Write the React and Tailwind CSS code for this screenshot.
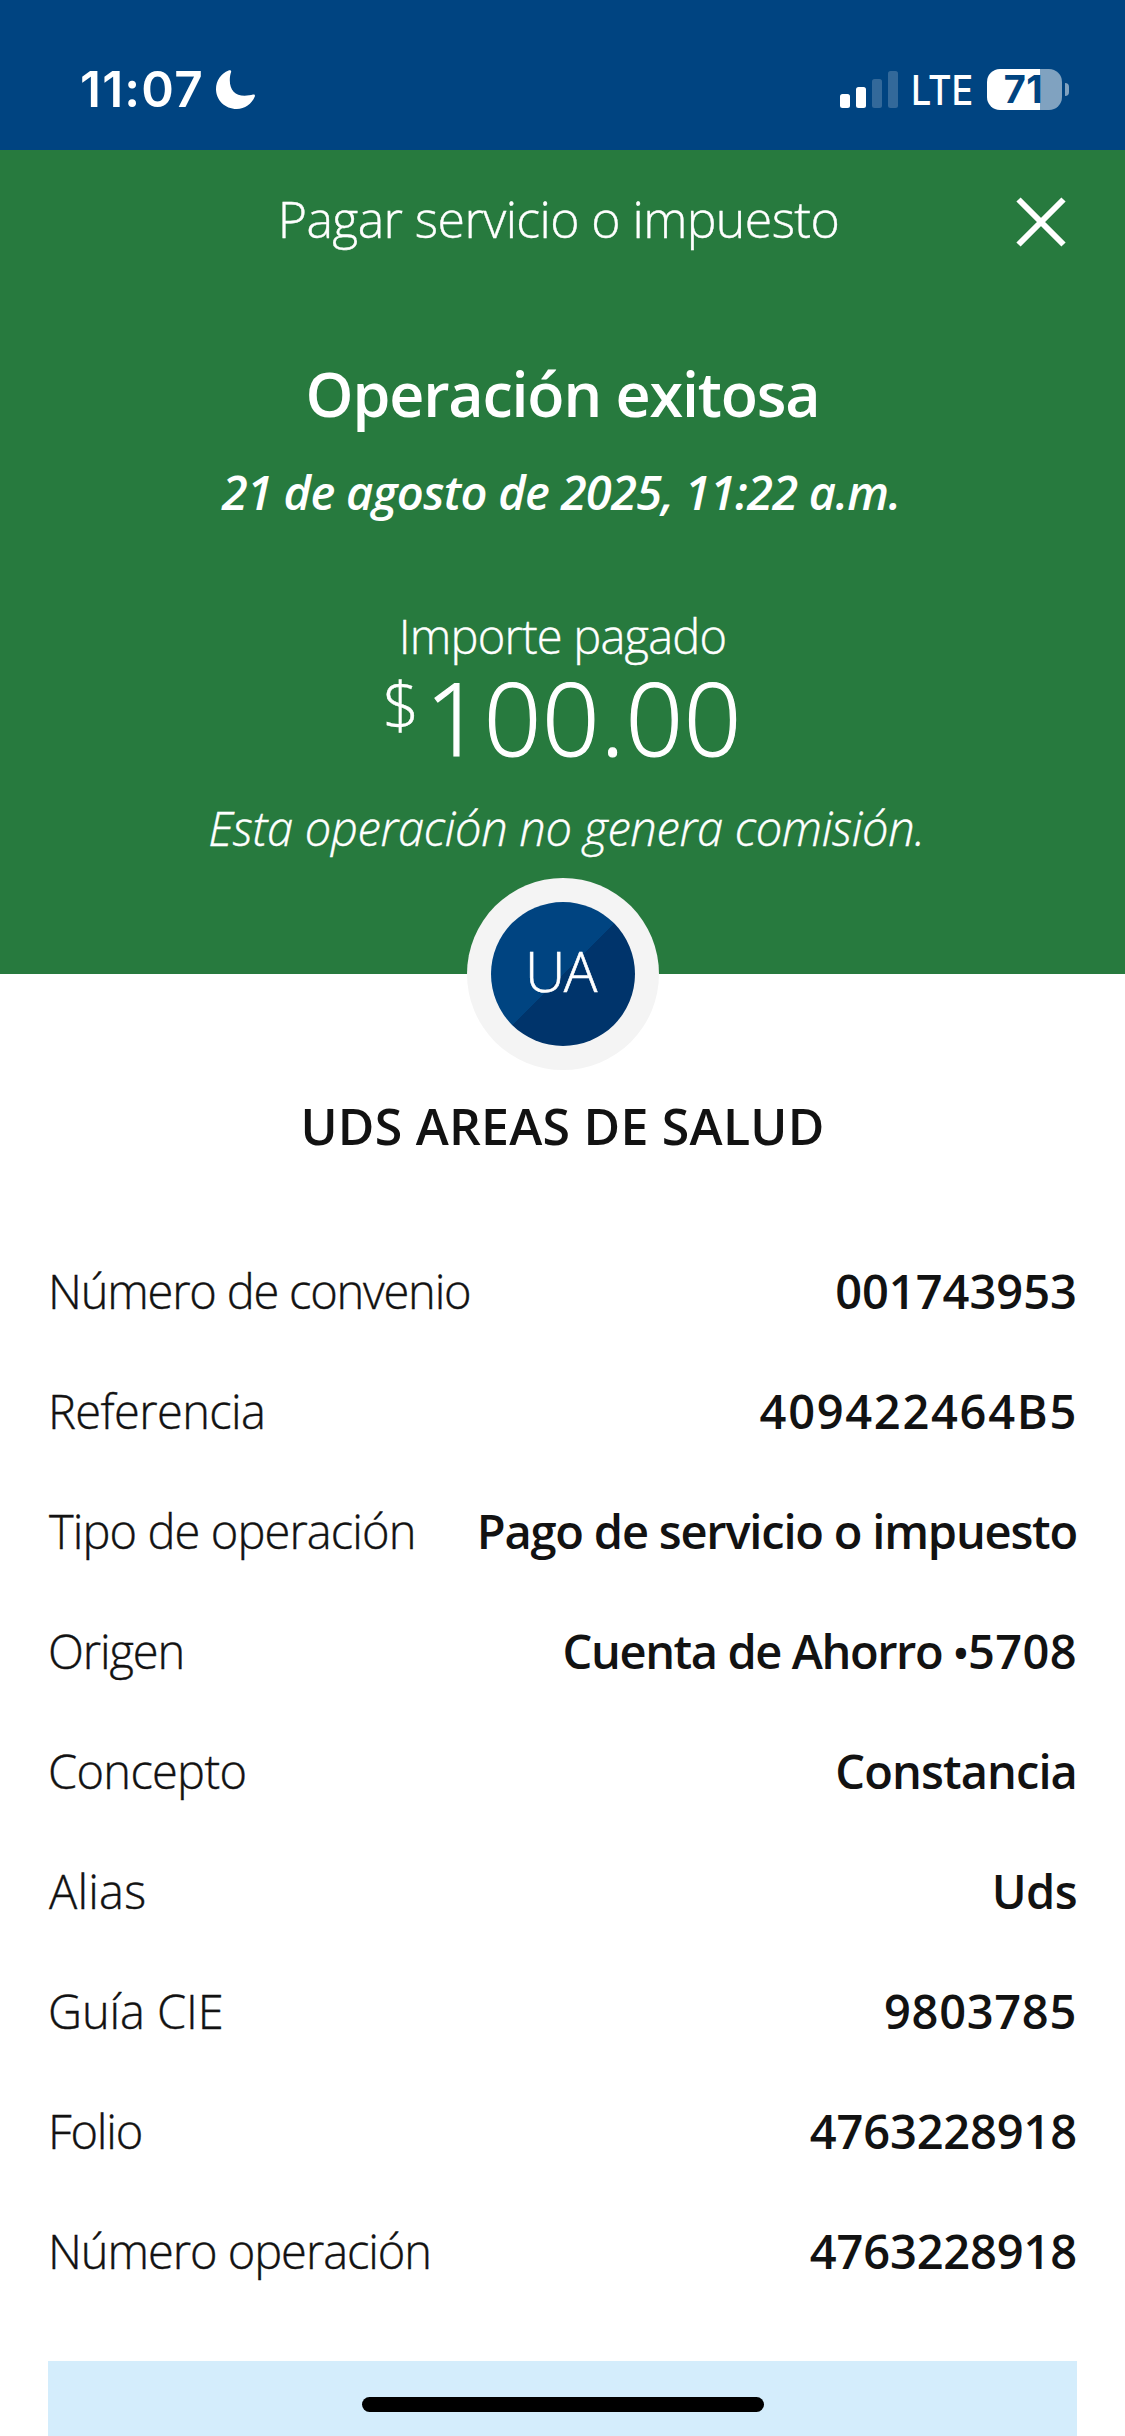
// src/pages/PaymentReceipt.js
import React from "react";

const details = [
  { label: "Número de convenio", value: "001743953", labelClass: "-ml-px tracking-[-1.2px]", valueClass: "tracking-[0px]" },
  { label: "Referencia", value: "409422464B5", labelClass: "-ml-px tracking-[-0.6px]", valueClass: "tracking-[1.7px] -mr-px" },
  { label: "Tipo de operación", value: "Pago de servicio o impuesto", labelClass: "tracking-[-0.9px]", valueClass: "tracking-[-1.2px]" },
  {
    label: "Origen",
    value: (
      <>
        Cuenta de Ahorro <span className="text-[42px] tracking-[-1px]">•</span>
        <span className="tracking-[0.4px]">5708</span>
      </>
    ),
    labelClass: "-ml-px tracking-[-1.1px]",
    valueClass: "tracking-[-1.4px]",
  },
  { label: "Concepto", value: "Constancia", labelClass: "-ml-px tracking-[-0.7px]", valueClass: "tracking-[-0.9px]" },
  { label: "Alias", value: "Uds", labelClass: "tracking-[0.2px]", valueClass: "tracking-[-0.6px]" },
  { label: "Guía CIE", value: "9803785", labelClass: "-ml-px tracking-[-0.1px]", valueClass: "tracking-[0.7px]" },
  { label: "Folio", value: "4763228918", labelClass: "-ml-px tracking-[-1.2px]", valueClass: "tracking-[-0.15px]" },
  { label: "Número operación", value: "4763228918", labelClass: "-ml-px tracking-[-1.05px]", valueClass: "tracking-[-0.15px]" },
];

function StatusBar() {
  return (
    <div className="flex h-[150px] items-center justify-between bg-[#004481] pt-7 pl-20 pr-14 font-['Inter',sans-serif] text-white">
      <div className="flex items-center">
        <span className="w-[124px] pt-[2px] text-[49.5px] leading-none font-semibold tracking-[1.2px] whitespace-nowrap">11:07</span>
        <svg className="ml-3 h-[39px] w-[39px]" viewBox="0 0 39 39" fill="currentColor">
          <path d="M12.6 0.4 C14 -0.3 15.6 0.4 15.1 2 C14.3 4.4 13.8 7 13.8 10.2 C13.8 19.8 19.2 25.8 28.6 25.8 C31.8 25.8 34.6 25.3 37 24.6 C38.5 24.1 39.3 25.2 38.8 26.6 C35.8 34 28.8 39 20.8 39 C9 39 0 30.2 0 19 C0 10.6 5 3.6 12.6 0.4 Z" />
        </svg>
      </div>

      <div className="flex items-center">
        <svg className="h-[37px] w-[58px]" viewBox="0 0 58 37" fill="currentColor">
          <rect x="0" y="23" width="10" height="14" rx="2.5" />
          <rect x="16" y="16" width="10" height="21" rx="2.5" />
          <rect x="32" y="8" width="10" height="29" rx="2.5" opacity="0.2" />
          <rect x="48" y="0" width="10" height="37" rx="2.5" opacity="0.2" />
        </svg>
        <span className="ml-[13px] w-[76px] origin-left scale-x-88 pt-[2px] text-[41px] leading-[42px] font-medium">LTE</span>
        {/* Battery */}
        <div className="flex h-[41px] w-[75px] items-center justify-center rounded-[13px] bg-linear-to-r from-white from-[53px] to-[#80a2c0] to-[53px] pr-[2px] text-[38px] leading-none font-bold tracking-[0.5px] text-[#004481]">
          71
        </div>
        <div className="ml-[3px] h-[13px] w-1 rounded-r-full bg-[#80a2c0]" />
      </div>
    </div>
  );
}

function DetailRow({ item }) {
  return (
    <div className="flex h-[120px] items-center justify-between text-[47px] whitespace-nowrap">
      <span className={`font-light [-webkit-text-stroke:0.4px] ${item.labelClass}`}>{item.label}</span>
      <span className={`font-semibold ${item.valueClass}`}>{item.value}</span>
    </div>
  );
}

export default function PaymentReceipt() {
  return (
    <div className="flex h-[2436px] w-[1125px] flex-col overflow-hidden bg-white font-['Open_Sans',sans-serif] text-[#121212]">
      <StatusBar />

      {/* Header */}
      <div className="flex h-[824px] shrink-0 flex-col items-center bg-[#277a3e] whitespace-nowrap text-white">
        <div className="grid h-[135px] w-full grid-cols-[108px_1fr_108px] items-center">
          <span />
          <h1 className="-ml-2 pt-[3px] text-center text-[50px] font-light tracking-[-0.6px] [-webkit-text-stroke:0.4px]">
            Pagar servicio o impuesto
          </h1>
          <button aria-label="Cerrar" className="mt-[9px] -ml-px">
            <svg className="h-[50px] w-[50px]" viewBox="0 0 50 50" fill="none" stroke="currentColor" strokeWidth="6">
              <path d="M2.5 2.5 L47.5 47.5 M47.5 2.5 L2.5 47.5" />
            </svg>
          </button>
        </div>
        <h2 className="mt-[68px] text-[61px] leading-[81px] font-semibold tracking-[-1.2px]">Operación exitosa</h2>
        <p className="mt-7 -ml-[3px] text-[47px] leading-[60px] font-semibold tracking-[-0.7px] italic">
          21 de agosto de 2025, 11:22 a.m.
        </p>
        <p className="mt-[84px] text-[47px] leading-[60px] font-light tracking-[-0.8px] [-webkit-text-stroke:0.4px]">
          Importe pagado
        </p>
        <p className="mt-px flex items-center font-light">
          <span className="mb-6 text-[64px] leading-none [-webkit-text-stroke:0.4px]">$</span>
          <span className="ml-[6px] text-[101px] leading-[100px] tracking-[0.8px] [-webkit-text-stroke:1.2px]">100.00</span>
        </p>
        <p className="mt-[31px] ml-2 text-[47px] leading-[60px] font-light tracking-[-0.3px] italic [-webkit-text-stroke:0.4px]">
          Esta operación no genera comisión.
        </p>
      </div>

      {/* Avatar */}
      <div className="z-10 -mt-24 flex size-48 shrink-0 items-center justify-center self-center rounded-full bg-[#f4f4f4]">
        <div className="flex size-36 items-center justify-center rounded-full bg-linear-135 from-[#004481] from-50% to-[#00346b] to-50% pr-[4px] pb-[8px] text-[56px] font-light tracking-[-1.5px] text-white [-webkit-text-stroke:0.6px]">
          UA
        </div>
      </div>
      <h3 className="mt-[26px] text-center text-[50px] leading-[60px] font-semibold tracking-[0.25px]">UDS AREAS DE SALUD</h3>

      {/* Details */}
      <div className="mt-[75px] pr-12 pl-[49px]">
        {details.map((item) => (
          <DetailRow key={item.label} item={item} />
        ))}
      </div>

      <div className="mx-12 mt-[50px] flex h-[75px] shrink-0 justify-center bg-[#d4edfc]">
        <div className="mt-9 h-[15px] w-[402px] rounded-full bg-black" />
      </div>
    </div>
  );
}
